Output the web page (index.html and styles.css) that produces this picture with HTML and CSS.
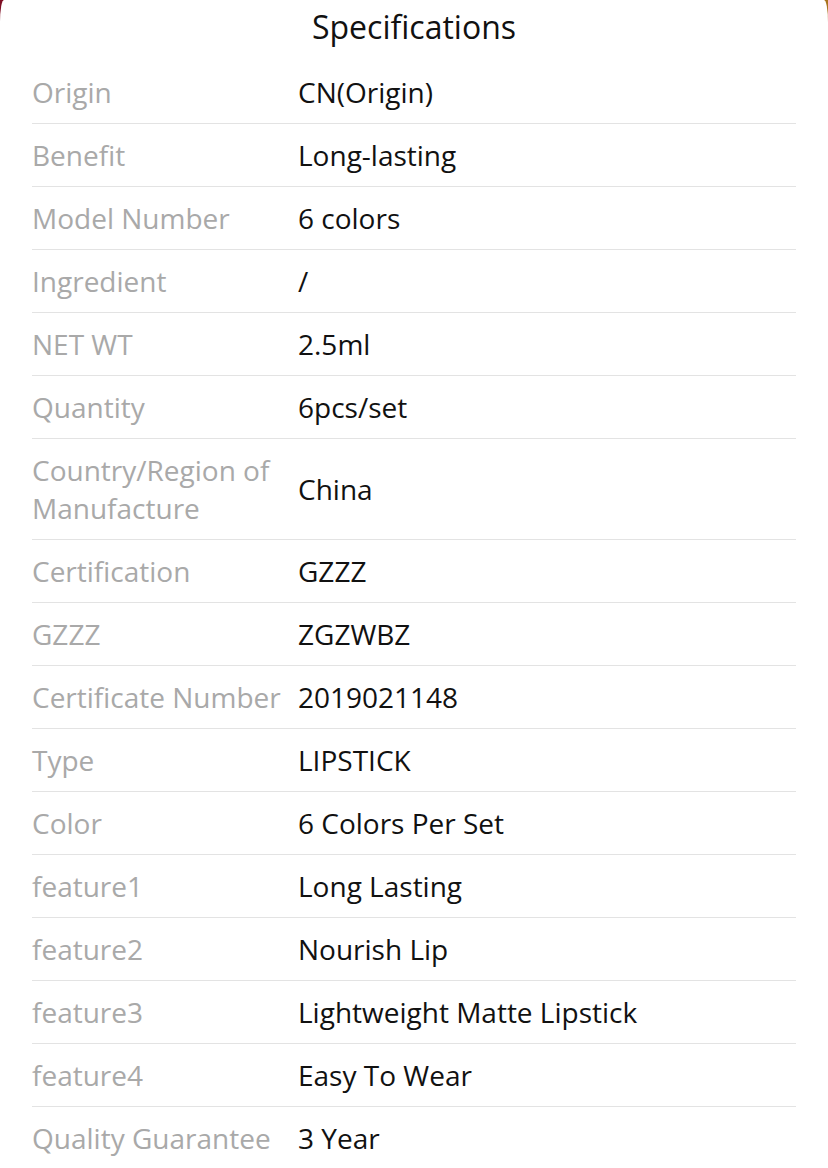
FILE: index.html
```html
<!DOCTYPE html>
<html>
<head>
<meta charset="utf-8">
<link rel="stylesheet" href="styles.css">
</head>
<body>
<div class="card">
  <h1 class="title">Specifications</h1>
  <div class="specs">
    <div class="row"><div class="label">Origin</div><div class="value">CN(Origin)</div></div>
    <div class="row"><div class="label">Benefit</div><div class="value">Long-lasting</div></div>
    <div class="row"><div class="label">Model Number</div><div class="value">6 colors</div></div>
    <div class="row"><div class="label">Ingredient</div><div class="value">/</div></div>
    <div class="row"><div class="label">NET WT</div><div class="value">2.5ml</div></div>
    <div class="row"><div class="label">Quantity</div><div class="value">6pcs/set</div></div>
    <div class="row"><div class="label">Country/Region of Manufacture</div><div class="value">China</div></div>
    <div class="row"><div class="label">Certification</div><div class="value">GZZZ</div></div>
    <div class="row"><div class="label">GZZZ</div><div class="value">ZGZWBZ</div></div>
    <div class="row"><div class="label">Certificate Number</div><div class="value">2019021148</div></div>
    <div class="row"><div class="label">Type</div><div class="value">LIPSTICK</div></div>
    <div class="row"><div class="label">Color</div><div class="value">6 Colors Per Set</div></div>
    <div class="row"><div class="label">feature1</div><div class="value">Long Lasting</div></div>
    <div class="row"><div class="label">feature2</div><div class="value">Nourish Lip</div></div>
    <div class="row"><div class="label">feature3</div><div class="value">Lightweight Matte Lipstick</div></div>
    <div class="row"><div class="label">feature4</div><div class="value">Easy To Wear</div></div>
    <div class="row"><div class="label">Quality Guarantee</div><div class="value">3 Year</div></div>
  </div>
</div>
</body>
</html>
```

FILE: styles.css
```css
html, body {
  margin: 0;
  padding: 0;
}
body {
  background: linear-gradient(90deg, #7e0f24 0%, #a03a2a 50%, #a8741e 100%);
  font-family: "Open Sans", "Noto Sans", sans-serif;
  width: 828px;
  height: 1168px;
  overflow: hidden;
}
.card {
  background: #fff;
  border-radius: 4px 4px 0 0 / 22px 22px 0 0;
  min-height: 1168px;
  padding: 0 32px;
  box-sizing: border-box;
}
.title {
  margin: 0;
  height: 61px;
  display: flex;
  align-items: center;
  justify-content: center;
  font-size: 32px;
  font-weight: 400;
  color: #111;
  padding-bottom: 8px;
  box-sizing: border-box;
}
.row {
  display: flex;
  align-items: center;
  border-bottom: 1px solid #e3e3e3;
  padding: 12px 0;
  min-height: 38px;
  font-size: 28px;
  line-height: 38px;
}
.label {
  width: 266px;
  flex: none;
  color: #a9a9a9;
}
.value {
  color: #111;
}
```
